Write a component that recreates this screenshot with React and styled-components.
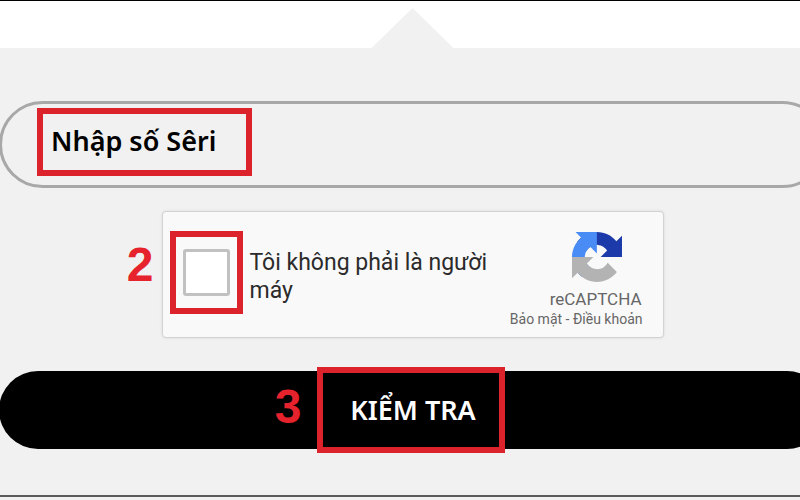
import styled, { createGlobalStyle } from "styled-components";

const GlobalStyle = createGlobalStyle`
  * {
    box-sizing: border-box;
  }
  body {
    margin: 0;
    background-color: #f1f1f1;
    font-family: "Noto Sans", "Open Sans", sans-serif;
  }
`;

const Page = styled.main`
  min-height: 100vh;
  overflow: hidden;
  background-color: #f1f1f1;
`;

// the form is a little wider than the window and runs off its right side
const Form = styled.form`
  display: flex;
  flex-direction: column;
  align-items: center;
  margin: 0 -26px 0 -1px;
  padding-bottom: 46px;
  border-bottom: 2px solid #5c5c5c;
`;

const TopBar = styled.div`
  display: flex;
  justify-content: center;
  align-items: flex-end;
  width: 100%;
  height: 48px;
  border-top: 1px solid #000;
  background-color: #fff;
`;

const Arrow = styled.div`
  width: 82px;
  height: 40px;
  background-color: #f1f1f1;
  clip-path: polygon(50% 0, 100% 100%, 0 100%);
`;

const Field = styled.label`
  position: relative;
  width: 100%;
  margin-top: 53px;
`;

const SerialInput = styled.input`
  display: block;
  width: 100%;
  height: 87px;
  padding: 0 49px 8px;
  border: 3px solid #a8a8a8;
  border-radius: 44px;
  background-color: transparent;
  color: #000;
  font-family: inherit;
  font-size: 27px;
  font-weight: 600;
  outline: none;
  &::placeholder {
    color: #000;
    opacity: 1;
  }
`;

const FieldMark = styled.span`
  position: absolute;
  top: 7px;
  left: 38px;
  width: 215px;
  height: 68px;
  border: 6px solid #dc222b;
  pointer-events: none;
`;

const Step = styled.span`
  position: absolute;
  top: ${(props) => props.$top}px;
  right: 100%;
  margin-right: ${(props) => props.$gap}px;
  color: #e6232c;
  font-family: "Liberation Sans", Arial, sans-serif;
  font-size: 48px;
  font-weight: 700;
  line-height: 54px;
`;

const Captcha = styled.div`
  position: relative;
  display: flex;
  align-items: center;
  width: 502px;
  height: 127px;
  margin-top: 23px;
  padding: 0 20px 4px 7px;
  border: 1px solid #d3d3d3;
  border-radius: 4px;
  background-color: #f9f9f9;
  box-shadow: 0 0 3px rgba(0, 0, 0, 0.1);
  font-family: Roboto, sans-serif;
`;

const CheckMark = styled.span`
  display: flex;
  justify-content: center;
  align-items: center;
  flex: none;
  width: 73px;
  height: 83px;
  margin-right: 7px;
  border: 6px solid #dc222b;
`;

const Checkbox = styled.input`
  appearance: none;
  flex: none;
  width: 47px;
  height: 47px;
  margin: 0;
  border: 3px solid #c1c1c1;
  border-radius: 3px;
  background-color: #fff;
  &:checked {
    background-color: #4a90f0;
  }
`;

const CaptchaLabel = styled.label`
  flex: 1;
  padding-top: 8px;
  color: #2b2b2b;
  font-size: 23px;
  line-height: 28px;
`;

const Brand = styled.div`
  display: flex;
  flex-direction: column;
  align-items: flex-end;
  flex: none;
  padding-top: 16px;
  color: #666;
  white-space: nowrap;
`;

const Logo = styled.svg`
  width: 50px;
  height: 50px;
  margin-right: 21px;
`;

const BrandName = styled.span`
  margin-top: 7px;
  margin-right: 1px;
  font-size: 17px;
  line-height: 20px;
`;

const Links = styled.span`
  font-size: 14px;
  line-height: 20px;
  a {
    color: inherit;
    text-decoration: none;
  }
`;

const SubmitButton = styled.button`
  display: flex;
  justify-content: center;
  align-items: center;
  width: 100%;
  height: 78px;
  margin-top: 33px;
  padding: 0 4px 0 0;
  border: 0;
  border-radius: 39px;
  background-color: #000;
  color: #fff;
  font-family: inherit;
  font-size: 27px;
  font-weight: 600;
`;

const SubmitMark = styled.span`
  position: relative;
  display: flex;
  justify-content: center;
  align-items: center;
  flex: none;
  width: 188px;
  height: 86px;
  padding: 0 0 2px 5px;
  border: 6px solid #dc222b;
`;

const CaptchaLogo = () => {
  return (
    <Logo viewBox="0 0 64 64" aria-hidden="true">
      <path
        fill="#1c3aa9"
        d="M64 31.955l-.033-1.37V4.687l-7.16 7.16C50.948 4.674 42.033.093 32.05.093c-10.4 0-19.622 4.96-25.458 12.64l11.736 11.86a15.55 15.55 0 0 1 4.754-5.334c2.05-1.6 4.952-2.906 8.968-2.906.485 0 .86.057 1.135.163 4.976.393 9.288 3.14 11.828 7.124l-8.307 8.307L64 31.953"
      />
      <path
        fill="#4a8cf5"
        d="M31.862.094l-1.37.033H4.594l7.16 7.16C4.58 13.147 0 22.06 0 32.046c0 10.4 4.96 19.622 12.64 25.458L24.5 45.768a15.55 15.55 0 0 1-5.334-4.754c-1.6-2.05-2.906-4.952-2.906-8.968 0-.485.057-.86.163-1.135.393-4.976 3.14-9.288 7.124-11.828l8.307 8.307L31.86.095"
      />
      <path
        fill="#b3b3b3"
        d="M.001 32.045l.033 1.37v25.898l7.16-7.16c5.86 7.173 14.774 11.754 24.76 11.754 10.4 0 19.622-4.96 25.458-12.64l-11.736-11.86a15.55 15.55 0 0 1-4.754 5.334c-2.05 1.6-4.952 2.906-8.968 2.906-.485 0-.86-.057-1.135-.163-4.976-.393-9.288-3.14-11.828-7.124l8.307-8.307c-10.522.04-22.4.066-27.295-.005"
      />
    </Logo>
  );
};

const App = () => {
  return (
    <Page>
      <GlobalStyle />
      <Form onSubmit={(e) => e.preventDefault()}>
        <TopBar>
          <Arrow />
        </TopBar>
        <Field>
          <SerialInput
            type="text"
            placeholder="Nhập số Sêri"
            aria-label="Nhập số Sêri"
          />
          <FieldMark />
        </Field>
        <Captcha>
          <Step $top={26} $gap={9}>2</Step>
          <CheckMark>
            <Checkbox type="checkbox" id="robot" />
          </CheckMark>
          <CaptchaLabel htmlFor="robot">
            Tôi không phải là người máy
          </CaptchaLabel>
          <Brand>
            <CaptchaLogo />
            <BrandName>reCAPTCHA</BrandName>
            <Links>
              <a href="#privacy">Bảo mật</a> - <a href="#terms">Điều khoản</a>
            </Links>
          </Brand>
        </Captcha>
        <SubmitButton type="submit">
          <SubmitMark>
            <Step $top={7} $gap={21}>3</Step>
            KIỂM TRA
          </SubmitMark>
        </SubmitButton>
      </Form>
    </Page>
  );
};

export default App;
